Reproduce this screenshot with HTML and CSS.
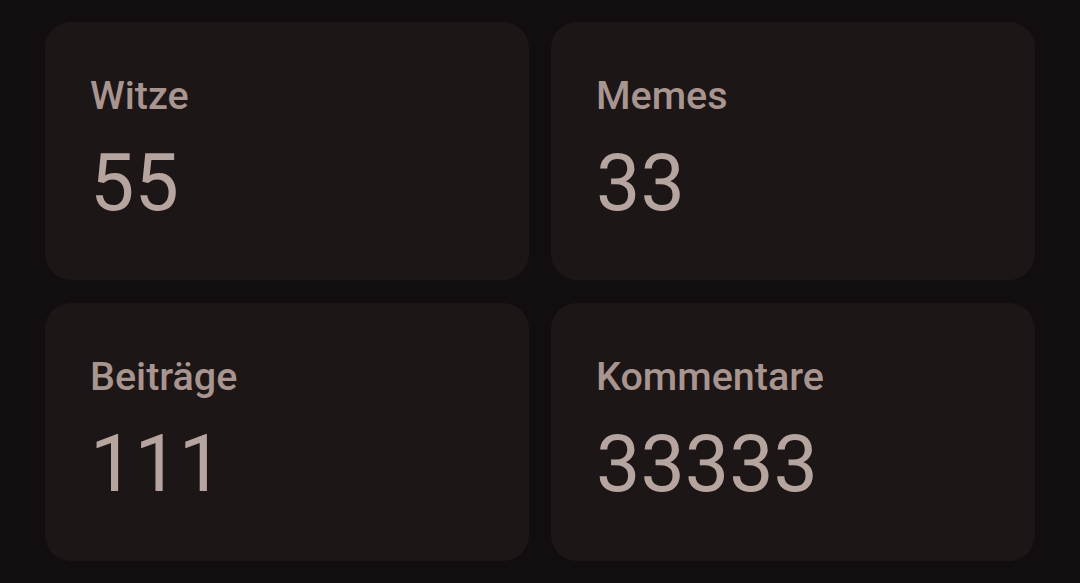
FILE: index.html
```html
<!DOCTYPE html>
<html lang="de">
<head>
    <meta charset="UTF-8">
    <meta name="viewport" content="width=device-width, initial-scale=1.0">
    <title>Statistik</title>
    <link rel="stylesheet" href="styles.css">
</head>
<body>
    <div class="stats">
        <div class="card">
            <div class="label">Witze</div>
            <div class="value">55</div>
        </div>
        <div class="card">
            <div class="label">Memes</div>
            <div class="value">33</div>
        </div>
        <div class="card">
            <div class="label">Beiträge</div>
            <div class="value">111</div>
        </div>
        <div class="card">
            <div class="label">Kommentare</div>
            <div class="value">33333</div>
        </div>
    </div>
</body>
</html>
```

FILE: styles.css
```css
body {
    margin: 0;
    font-family: Roboto, "Noto Sans", sans-serif;
    background-color: #120d0e;
    height: 100vh;
    overflow: hidden;
}

.stats {
    display: grid;
    grid-template-columns: 1fr 1fr;
    column-gap: 22px;
    row-gap: 23px;
    padding: 22px 45px;
}

.card {
    background-color: #1c1617;
    border-radius: 26px;
    height: 258px;
    padding: 0 45px;
    box-sizing: border-box;
}

.label {
    color: #a8958f;
    font-weight: 500;
    font-size: 39.5px;
    line-height: 1;
    margin-top: 54px;
}

.value {
    color: #b6a49e;
    font-size: 79px;
    line-height: 1;
    margin-top: 28px;
}
```
